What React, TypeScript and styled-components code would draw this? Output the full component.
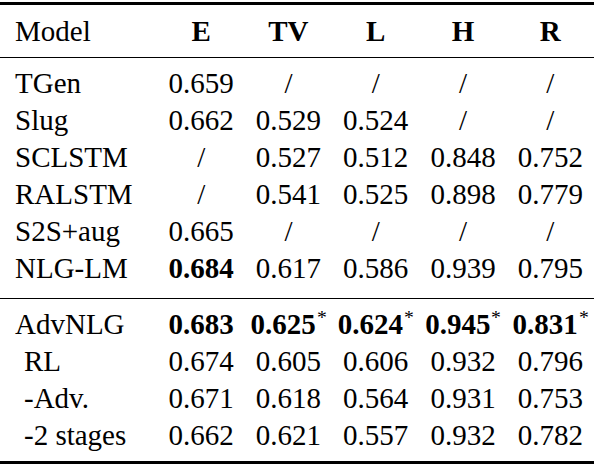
import React from 'react';
import styled, { createGlobalStyle } from 'styled-components';

const GlobalStyle = createGlobalStyle`
  html,
  body {
    margin: 0;
    padding: 0;
    background-color: #ffffff;
    font-family: "Liberation Serif", "Times New Roman", Tinos, serif;
  }
`;

const Page = styled.div`
  width: 600px;
  height: 466px;
  padding-top: 2px;
  box-sizing: border-box;
  overflow: hidden;
`;

const Table = styled.table`
  width: 594px;
  border-collapse: collapse;
  table-layout: fixed;

  font-family: "Liberation Serif", "Times New Roman", Tinos, serif;
  font-size: 29px;
  font-weight: normal;
  line-height: 37px;
  color: #000000;

  border-top: 3px solid #000000;
  border-bottom: 3px solid #000000;
`;

const HeadRow = styled.tr`
  border-bottom: 1px solid #000000;
`;

const HeadCell = styled.th<{ $first?: boolean }>`
  padding: 8px 0 7px;
  padding-left: ${(p) => (p.$first ? '15px' : '0')};
  font-family: "Liberation Serif", "Times New Roman", Tinos, serif;
  text-align: ${(p) => (p.$first ? 'left' : 'center')};
  font-weight: ${(p) => (p.$first ? 'normal' : 'bold')};
  white-space: nowrap;
`;

const Body = styled.tbody<{ $last?: boolean }>`
  border-bottom: ${(p) => (p.$last ? 'none' : '1px solid #000000')};
`;

const Row = styled.tr<{ $top?: boolean; $bottom?: number }>`
  & > td {
    padding-top: ${(p) => (p.$top ? '7px' : '0')};
    padding-bottom: ${(p) => p.$bottom ?? 0}px;
  }
`;

const NameCell = styled.td<{ $indent?: boolean }>`
  padding-left: ${(p) => (p.$indent ? '24px' : '15px')} !important;
  font-family: "Liberation Serif", "Times New Roman", Tinos, serif;
  text-align: left;
  white-space: nowrap;
`;

const ValueCell = styled.td<{ $bold?: boolean }>`
  font-family: "Liberation Serif", "Times New Roman", Tinos, serif;
  text-align: center;
  white-space: nowrap;
  font-weight: ${(p) => (p.$bold ? 'bold' : 'normal')};
`;

const Star = styled.span`
  display: inline-block;
  font-weight: normal;
  margin-right: -4px;
  transform: translate(1px, -1px) scale(0.68);
  transform-origin: left top;
`;

type Cell = { v: string; bold?: boolean; star?: boolean };

interface Result {
  name: string;
  indent?: boolean;
  cells: Cell[];
}

const plain = (...vals: string[]): Cell[] => vals.map((v) => ({ v }));

const baselines: Result[] = [
  { name: 'TGen', cells: plain('0.659', '/', '/', '/', '/') },
  { name: 'Slug', cells: plain('0.662', '0.529', '0.524', '/', '/') },
  { name: 'SCLSTM', cells: plain('/', '0.527', '0.512', '0.848', '0.752') },
  { name: 'RALSTM', cells: plain('/', '0.541', '0.525', '0.898', '0.779') },
  { name: 'S2S+aug', cells: plain('0.665', '/', '/', '/', '/') },
  {
    name: 'NLG-LM',
    cells: [{ v: '0.684', bold: true }, ...plain('0.617', '0.586', '0.939', '0.795')],
  },
];

const ours: Result[] = [
  {
    name: 'AdvNLG',
    cells: [
      { v: '0.683', bold: true },
      { v: '0.625', bold: true, star: true },
      { v: '0.624', bold: true, star: true },
      { v: '0.945', bold: true, star: true },
      { v: '0.831', bold: true, star: true },
    ],
  },
  { name: 'RL', indent: true, cells: plain('0.674', '0.605', '0.606', '0.932', '0.796') },
  { name: '-Adv.', indent: true, cells: plain('0.671', '0.618', '0.564', '0.931', '0.753') },
  { name: '-2 stages', indent: true, cells: plain('0.662', '0.621', '0.557', '0.932', '0.782') },
];

const columns = ['E', 'TV', 'L', 'H', 'R'];

const renderRows = (rows: Result[], bottom: number) =>
  rows.map((row, i) => (
    <Row key={row.name} $top={i === 0} $bottom={i === rows.length - 1 ? bottom : 0}>
      <NameCell $indent={row.indent}>{row.name}</NameCell>
      {row.cells.map((c, j) => (
        <ValueCell key={j} $bold={c.bold}>
          {c.v}
          {c.star && <Star>*</Star>}
        </ValueCell>
      ))}
    </Row>
  ));

const App: React.FC = () => {
  return (
    <Page>
      <GlobalStyle />
      <Table>
        <colgroup>
          <col style={{ width: 157 }} />
          {columns.map((c) => (
            <col key={c} style={{ width: 87 }} />
          ))}
        </colgroup>
        <thead>
          <HeadRow>
            <HeadCell $first>Model</HeadCell>
            {columns.map((c) => (
              <HeadCell key={c}>{c}</HeadCell>
            ))}
          </HeadRow>
        </thead>
        <Body>{renderRows(baselines, 11)}</Body>
        <Body $last>{renderRows(ours, 7)}</Body>
      </Table>
    </Page>
  );
};

export default App;
